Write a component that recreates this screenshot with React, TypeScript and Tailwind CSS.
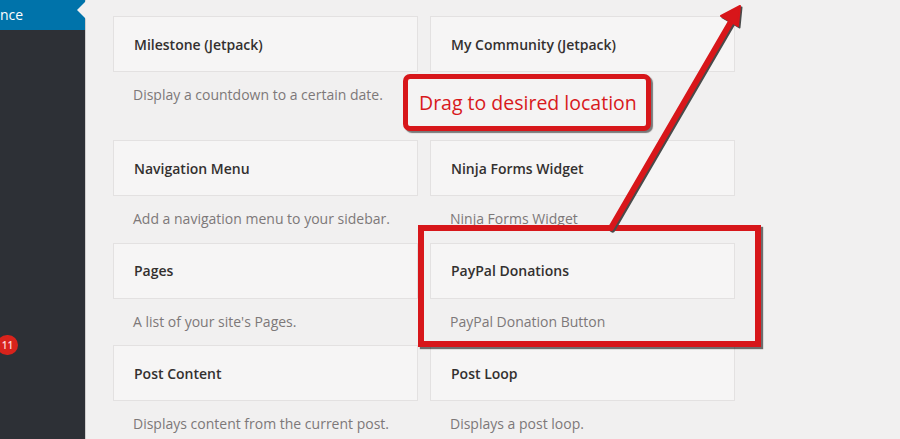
const widgets = [
  { title: 'Milestone (Jetpack)', desc: 'Display a countdown to a certain date.' },
  { title: 'My Community (Jetpack)', desc: '' },
  { title: 'Navigation Menu', desc: 'Add a navigation menu to your sidebar.' },
  { title: 'Ninja Forms Widget', desc: 'Ninja Forms Widget' },
  { title: 'Pages', desc: "A list of your site's Pages." },
  { title: 'PayPal Donations', desc: 'PayPal Donation Button' },
  { title: 'Post Content', desc: 'Displays content from the current post.' },
  { title: 'Post Loop', desc: 'Displays a post loop.' },
];

function Sidebar() {
  return (
    <aside className="relative h-full w-[86px] shrink-0 border-r border-[#cfcdcd] bg-[#2d3036]">
      <div className="relative flex h-[30px] items-center bg-[#0073aa]">
        <span className="whitespace-nowrap text-[14px] leading-5 text-white">nce</span>
        {/* current-menu pointer */}
        <div className="absolute right-[-1px] top-[1px] h-0 w-0 border-y-[9px] border-r-[9px] border-y-transparent border-r-[#f1f0f0]" />
      </div>
      <div className="absolute left-[-3px] top-[335px] flex h-[20px] w-[21px] items-center justify-center rounded-full bg-[#d8231c] text-[10px] font-semibold text-[#ffd6d6]">
        11
      </div>
    </aside>
  );
}

export default function App() {
  return (
    <div
      className="relative flex h-[439px] w-[900px] overflow-hidden bg-[#f1f0f0]"
      style={{ fontFamily: '"Open Sans", "Noto Sans", sans-serif' }}
    >
      <Sidebar />

      <main className="flex-1 pl-[27px] pt-4">
        <div className="grid grid-cols-[305px_305px] gap-x-3">
          {widgets.map((w, i) => (
            <div key={w.title}>
              <div className="flex h-[56px] items-center border border-[#e3e1e1] bg-[#f6f5f5] px-5">
                <h3 className="text-[14px] font-semibold text-[#33302f]">{w.title}</h3>
              </div>
              <div className={`${i < 2 ? 'h-[68px]' : 'h-[46.5px]'} px-5 pt-[13px] text-[14px] leading-5 text-[#7d7879]`}>
                {w.desc}
              </div>
            </div>
          ))}
        </div>
      </main>

      {/* annotations */}
      <div className="absolute left-[403px] top-[74px] flex h-[57px] w-[248px] items-center rounded-[7px] border-[5px] border-[#d7161a] bg-[#f4f3f3] pl-[11px] shadow-[2px_2px_1px_rgba(0,0,0,0.5)]">
        <span className="text-[19.5px] leading-none text-[#d8191c]">Drag to desired location</span>
      </div>

      <div className="absolute left-[418px] top-[225px] h-[122px] w-[343px] border-[6px] border-[#d7161a] shadow-[2px_2px_1px_rgba(0,0,0,0.55)]" />

      <svg className="pointer-events-none absolute left-0 top-0" width="900" height="439" viewBox="0 0 900 439">
        <g transform="translate(1.5 1.5)" fill="#4a4a4a" stroke="#4a4a4a">
          <line x1="611" y1="228" x2="732" y2="20" strokeWidth="6" strokeLinecap="round" />
          <polygon points="740,6 721,16 738,26" strokeWidth="2" strokeLinejoin="round" />
        </g>
        <g fill="#d8161a" stroke="#d8161a">
          <line x1="611" y1="228" x2="732" y2="20" strokeWidth="6" strokeLinecap="round" />
          <polygon points="740,6 721,16 738,26" strokeWidth="2" strokeLinejoin="round" />
        </g>
      </svg>
    </div>
  );
}
